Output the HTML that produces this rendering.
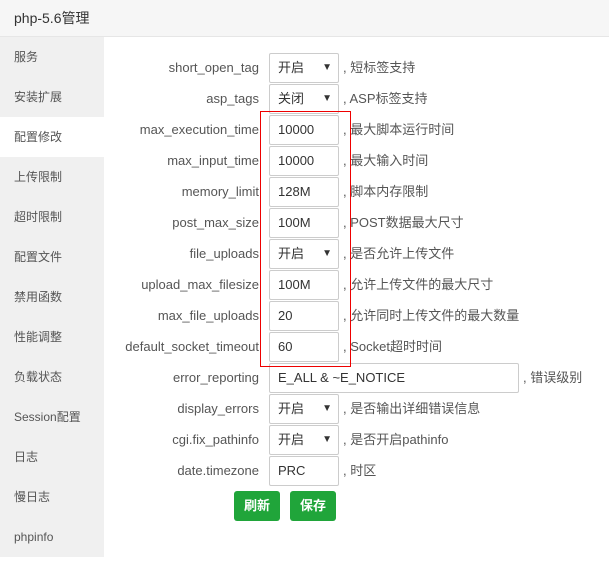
<!DOCTYPE html>
<html><head><meta charset="utf-8"><style>
*{margin:0;padding:0;box-sizing:border-box}
body{width:609px;height:566px;background:#fff;font-family:"Liberation Sans","Noto Sans CJK SC",sans-serif;font-size:13px;color:#555;position:relative;overflow:hidden}
.hd{position:absolute;left:0;top:0;width:609px;height:37px;background:#f6f6f6;border-bottom:1px solid #e6e6e6;font-size:14px;color:#333;line-height:36px;padding-left:14px}
.sb{position:absolute;left:0;top:37px;width:104px;height:520px;background:#f0f0f0}
.sb div{height:40px;line-height:40px;padding-left:14px;color:#555;font-size:12px}
.sb .on{background:#fff}
.r{position:absolute;left:0;height:30px;width:609px}
.l{position:absolute;right:350px;top:0;line-height:30px;text-align:right;color:#555;font-size:13px;white-space:nowrap}
.i{position:absolute;left:269px;top:0;width:70px;height:30px;border:1px solid #ccc;border-radius:2px;line-height:28px;padding-left:8px;color:#333;background:#fff;font-size:13px}
.i.s::after{content:"▼";position:absolute;right:6px;top:0;font-size:10px;color:#333}
.d{position:absolute;left:343px;top:0;line-height:30px;white-space:nowrap;color:#555;font-size:13px}
.box{position:absolute;left:260px;top:111px;width:91px;height:256px;border:1px solid #e00}
.b{position:absolute;top:491px;width:46px;height:30px;background:#20a53a;color:#fff;border-radius:3px;text-align:center;line-height:30px;font-weight:bold;font-size:13px}
</style></head><body>
<div class="hd">php-5.6管理</div>
<div class="sb">
<div>服务</div><div>安装扩展</div><div class="on">配置修改</div><div>上传限制</div><div>超时限制</div><div>配置文件</div><div>禁用函数</div><div>性能调整</div><div>负载状态</div><div>Session配置</div><div>日志</div><div>慢日志</div><div>phpinfo</div>
</div>
<div class="r" style="top:53px"><span class="l">short_open_tag</span><span class="i s">开启</span><span class="d">, 短标签支持</span></div>
<div class="r" style="top:84px"><span class="l">asp_tags</span><span class="i s">关闭</span><span class="d">, ASP标签支持</span></div>
<div class="r" style="top:115px"><span class="l">max_execution_time</span><span class="i">10000</span><span class="d">, 最大脚本运行时间</span></div>
<div class="r" style="top:146px"><span class="l">max_input_time</span><span class="i">10000</span><span class="d">, 最大输入时间</span></div>
<div class="r" style="top:177px"><span class="l">memory_limit</span><span class="i">128M</span><span class="d">, 脚本内存限制</span></div>
<div class="r" style="top:208px"><span class="l">post_max_size</span><span class="i">100M</span><span class="d">, POST数据最大尺寸</span></div>
<div class="r" style="top:239px"><span class="l">file_uploads</span><span class="i s">开启</span><span class="d">, 是否允许上传文件</span></div>
<div class="r" style="top:270px"><span class="l">upload_max_filesize</span><span class="i">100M</span><span class="d">, 允许上传文件的最大尺寸</span></div>
<div class="r" style="top:301px"><span class="l">max_file_uploads</span><span class="i">20</span><span class="d">, 允许同时上传文件的最大数量</span></div>
<div class="r" style="top:332px"><span class="l">default_socket_timeout</span><span class="i">60</span><span class="d">, Socket超时时间</span></div>
<div class="r" style="top:363px"><span class="l">error_reporting</span><span class="i" style="width:250px">E_ALL &amp; ~E_NOTICE</span><span class="d" style="left:523px">, 错误级别</span></div>
<div class="r" style="top:394px"><span class="l">display_errors</span><span class="i s">开启</span><span class="d">, 是否输出详细错误信息</span></div>
<div class="r" style="top:425px"><span class="l">cgi.fix_pathinfo</span><span class="i s">开启</span><span class="d">, 是否开启pathinfo</span></div>
<div class="r" style="top:456px"><span class="l">date.timezone</span><span class="i">PRC</span><span class="d">, 时区</span></div>
<div class="box"></div>
<div class="b" style="left:234px">刷新</div>
<div class="b" style="left:290px">保存</div>
</body></html>
